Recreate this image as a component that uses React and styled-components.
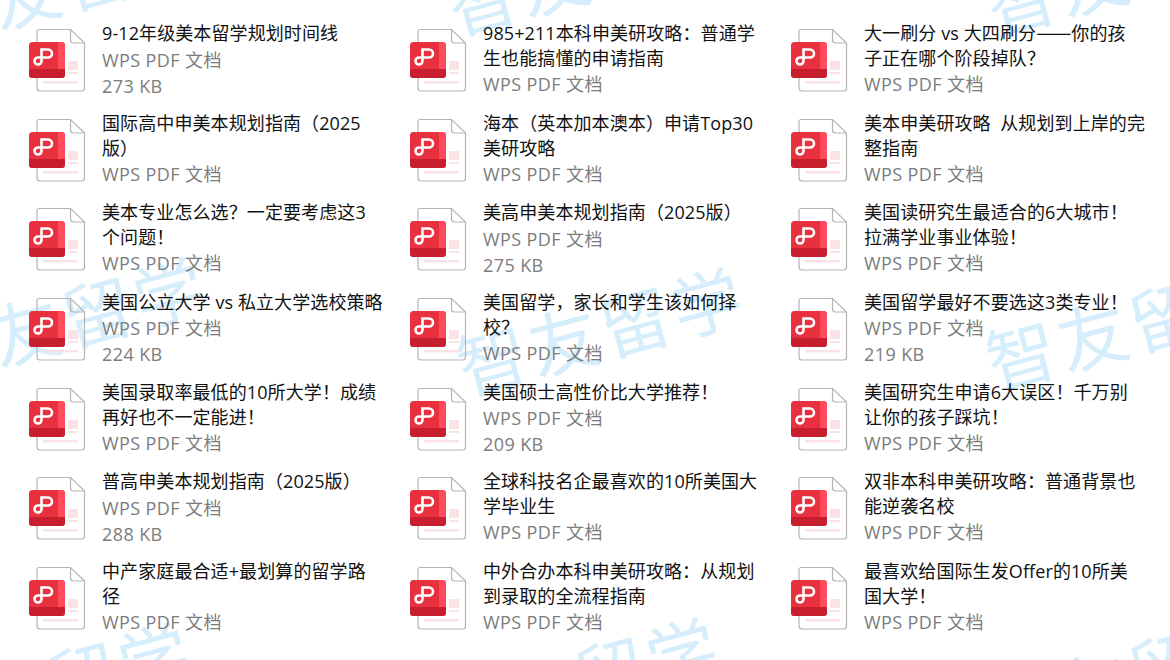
import React from 'react';
import styled, { createGlobalStyle } from 'styled-components';

const GlobalStyle = createGlobalStyle`
  html, body {
    margin: 0;
    padding: 0;
    background: #fff;
  }
`;

const Page = styled.div`
  position: relative;
  width: 1170px;
  height: 660px;
  overflow: hidden;
  background: #fff;
  font-family: "Open Sans", "Noto Sans CJK SC", sans-serif;
`;

const Watermark = styled.div`
  position: absolute;
  left: ${(p) => p.$x}px;
  top: ${(p) => p.$y}px;
  font-family: "Noto Sans CJK SC", sans-serif;
  font-size: 70px;
  line-height: 80px;
  letter-spacing: 4px;
  white-space: nowrap;
  color: #d6eefb;
  transform: rotate(-15deg);
  transform-origin: left bottom;
`;

const Grid = styled.div`
  position: relative;
  display: grid;
  grid-template-columns: repeat(3, 381px);
  grid-auto-rows: 89.67px;
  padding: 21px 0 0 28px;
`;

const Item = styled.div`
  display: flex;
  align-items: flex-start;
`;

const IconBox = styled.div`
  flex: none;
  width: 74px;
  height: 72px;
  padding-top: 7px;
`;

const Info = styled.div`
  min-width: 0;
`;

const Title = styled.div`
  height: 25px;
  font-size: 18px;
  line-height: 25px;
  letter-spacing: 0.1px;
  color: #111;
  white-space: pre;
`;

const Dash = styled.span`
  font-family: "Noto Sans CJK SC", sans-serif;
  font-size: 21px;
  line-height: 1;
  letter-spacing: 0;
`;

const Meta = styled.div`
  font-size: 18px;
  line-height: 26px;
  letter-spacing: 0.4px;
  color: #7c7c7c;
  ${(p) => p.$first && 'padding-top: 0.5px;'}
`;

function PdfIcon() {
  return (
    <svg width="58" height="65" viewBox="0 0 58 65" fill="none">
      <path
        d="M11 1.5h31.5L56.5 15v45a3 3 0 0 1-3 3H12a3 3 0 0 1-3-3V3.500a2 2 0 0 1 2-2z"
        fill="none"
        stroke="#b5b5b5"
        strokeWidth="1.2"
      />
      <path d="M42.5 1.500V12a3 3 0 0 0 3 3h11" stroke="#b5b5b5" strokeWidth="1.2" />
      <rect x="40" y="33" width="10" height="9" fill="#fbe3e5" />
      <rect x="40" y="44" width="10" height="2" fill="#fbe3e5" />
      <rect x="15" y="53" width="35" height="2.5" fill="#fbe3e5" />
      <rect x="1" y="14" width="36" height="36" rx="3.5" fill="#e9303f" />
      <path d="M30 14h3.500A3.500 3.500 0 0 1 37 17.500V44H30z" fill="#ff4b5b" />
      <path d="M1 41h36v5.500a3.500 3.500 0 0 1-3.500 3.500h-29A3.500 3.500 0 0 1 1 46.500z" fill="#c81f2e" />
      <path
        d="M13.500 33V21.500H20a4 4 0 0 1 0 8H10a3.500 3.500 0 1 0 3.500 3.500"
        stroke="#fff"
        strokeWidth="2.600"
        fill="none"
      />
    </svg>
  );
}

const marks = [
  { x: -70, y: -22 },
  { x: 458, y: -35 },
  { x: 997, y: -35 },
  { x: -70, y: 315 },
  { x: 468, y: 325 },
  { x: 997, y: 320 },
  { x: -85, y: 680 },
  { x: 443, y: 675 },
  { x: 997, y: 670 },
];

const files = [
  { lines: ['9-12年级美本留学规划时间线'], size: '273 KB' },
  { lines: ['985+211本科申美研攻略：普通学', '生也能搞懂的申请指南'] },
  { lines: [<>大一刷分 vs 大四刷分<Dash>——</Dash>你的孩</>, '子正在哪个阶段掉队？'] },
  { lines: ['国际高中申美本规划指南（2025', '版）'] },
  { lines: ['海本（英本加本澳本）申请Top30', '美研攻略'] },
  { lines: ['美本申美研攻略  从规划到上岸的完', '整指南'] },
  { lines: ['美本专业怎么选？一定要考虑这3', '个问题！'] },
  { lines: ['美高申美本规划指南（2025版）'], size: '275 KB' },
  { lines: ['美国读研究生最适合的6大城市！', '拉满学业事业体验！'] },
  { lines: ['美国公立大学 vs 私立大学选校策略'], size: '224 KB' },
  { lines: ['美国留学，家长和学生该如何择', '校？'] },
  { lines: ['美国留学最好不要选这3类专业！'], size: '219 KB' },
  { lines: ['美国录取率最低的10所大学！成绩', '再好也不一定能进！'] },
  { lines: ['美国硕士高性价比大学推荐！'], size: '209 KB' },
  { lines: ['美国研究生申请6大误区！千万别', '让你的孩子踩坑！'] },
  { lines: ['普高申美本规划指南（2025版）'], size: '288 KB' },
  { lines: ['全球科技名企最喜欢的10所美国大', '学毕业生'] },
  { lines: ['双非本科申美研攻略：普通背景也', '能逆袭名校'] },
  { lines: ['中产家庭最合适+最划算的留学路', '径'] },
  { lines: ['中外合办本科申美研攻略：从规划', '到录取的全流程指南'] },
  { lines: ['最喜欢给国际生发Offer的10所美', '国大学！'] },
];

export default function App() {
  return (
    <Page>
      <GlobalStyle />
      {marks.map((m) => (
        <Watermark key={`${m.x}-${m.y}`} $x={m.x} $y={m.y}>
          智友留学
        </Watermark>
      ))}
      <Grid>
        {files.map((f, i) => (
          <Item key={i}>
            <IconBox>
              <PdfIcon />
            </IconBox>
            <Info>
              {f.lines.map((line, j) => (
                <Title key={j}>{line}</Title>
              ))}
              <Meta $first={f.lines.length === 1}>WPS PDF 文档</Meta>
              {f.size && <Meta>{f.size}</Meta>}
            </Info>
          </Item>
        ))}
      </Grid>
    </Page>
  );
}
